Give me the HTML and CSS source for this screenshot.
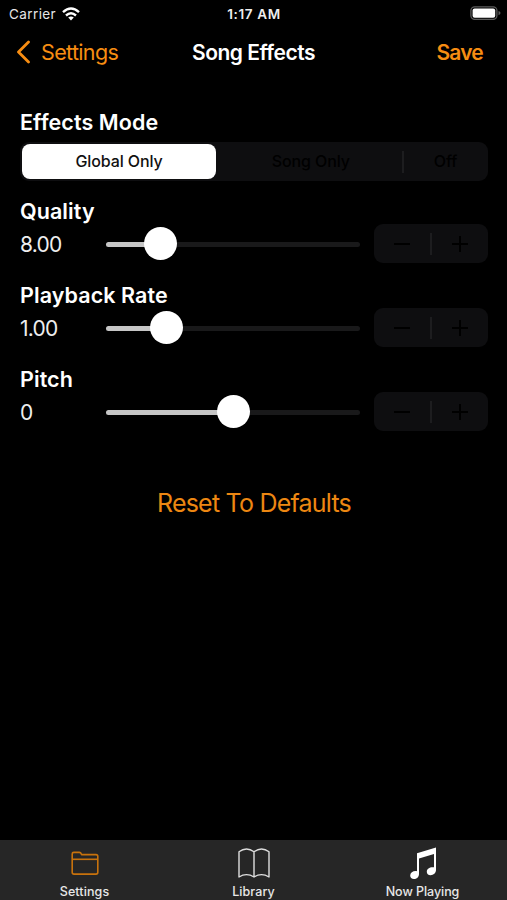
FILE: index.html
```html
<!DOCTYPE html>
<html lang="en">
<head>
<meta charset="utf-8">
<title>Song Effects</title>
<link rel="stylesheet" href="styles.css">
</head>
<body>
<div class="status">
  <div class="carrier"><span>Carrier</span>
    <svg width="18" height="14" viewBox="0 0 18 14"><g fill="none" stroke="#fff" stroke-width="2.4"><path d="M1 5.2Q9-2.2 17 5.2"/><path d="M4 8.5Q9 4 14 8.5"/></g><path d="M6.2 10.6Q9 8.4 11.8 10.6L9 13.6Z" fill="#fff"/></svg>
  </div>
  <div class="time">1:17 AM</div>
  <svg class="battery" width="31" height="14" viewBox="0 0 31 14"><rect x=".9" y=".8" width="26" height="12.6" rx="3.8" fill="none" stroke="#5c5c5c" stroke-width="1.3"/><rect x="2.6" y="2.5" width="22.6" height="9.2" rx="2" fill="#fff"/><path d="M28.5 5Q30.5 5.6 30.5 7.1Q30.5 8.6 28.5 9.2Z" fill="#5c5c5c"/></svg>
</div>
<header class="nav">
  <div class="back">
    <svg width="15" height="24" viewBox="0 0 15 24"><path d="M13.5 2L3.5 12L13.5 22" fill="none" stroke="#f78d12" stroke-width="2.8" stroke-linecap="round" stroke-linejoin="round"/></svg>
    <span>Settings</span>
  </div>
  <h1>Song Effects</h1>
  <div class="save">Save</div>
</header>
<main>
  <h2 class="mode-title">Effects Mode</h2>
  <div class="segments">
    <div class="seg active">Global Only</div>
    <div class="seg song">Song Only</div>
    <i class="divider"></i>
    <div class="seg">Off</div>
  </div>
  <section class="effect">
    <h2>Quality</h2>
    <div class="row">
      <span class="value">8.00</span>
      <div class="slider"><div class="fill" style="width:54px"></div><div class="thumb"></div></div>
      <div class="stepper"><svg width="18" height="18"><path d="M1 9H17"/></svg><i class="divider"></i><svg width="18" height="18"><path d="M1 9H17M9 1V17"/></svg></div>
    </div>
  </section>
  <section class="effect">
    <h2>Playback Rate</h2>
    <div class="row">
      <span class="value">1.00</span>
      <div class="slider"><div class="fill" style="width:60.5px"></div><div class="thumb"></div></div>
      <div class="stepper"><svg width="18" height="18"><path d="M1 9H17"/></svg><i class="divider"></i><svg width="18" height="18"><path d="M1 9H17M9 1V17"/></svg></div>
    </div>
  </section>
  <section class="effect">
    <h2>Pitch</h2>
    <div class="row">
      <span class="value">0</span>
      <div class="slider"><div class="fill" style="width:127.5px"></div><div class="thumb"></div></div>
      <div class="stepper"><svg width="18" height="18"><path d="M1 9H17"/></svg><i class="divider"></i><svg width="18" height="18"><path d="M1 9H17M9 1V17"/></svg></div>
    </div>
  </section>
  <div class="reset"><span>Reset To Defaults</span></div>
</main>
<nav class="tabs">
  <div class="tab">
    <svg width="34" height="34" viewBox="0 0 34 34"><g fill="none" stroke="#c8720c" stroke-width="1.6" stroke-linejoin="round"><path d="M4.2 25.3V7Q4.2 5.4 5.8 5.4H11.5Q12.6 5.4 13 6.4L13.6 7.6H28Q29.8 7.6 29.8 9.4V25.3Q29.8 27.1 28 27.1H6Q4.2 27.1 4.2 25.3Z"/><path d="M4.2 12.3H29.8"/></g></svg>
    <span>Settings</span>
  </div>
  <div class="tab">
    <svg width="34" height="34" viewBox="0 0 34 34"><path d="M17 4.8V30M17 4.8Q9.5-.8 2 4.8V30Q9.5 25.3 17 30Q24.5 25.3 32 30V4.8Q24.5-.8 17 4.8Z" fill="none" stroke="#dedede" stroke-width="1.4" stroke-linejoin="round"/></svg>
    <span>Library</span>
  </div>
  <div class="tab">
    <svg width="34" height="34" viewBox="0 0 34 34"><path d="M11 6.3L30 .6V23C30 26 27.4 28.2 24.6 28.2C22.2 28.2 20.6 26.5 20.8 24.4C21 21.5 24.2 19.6 28 20.3V7L13 11.5V27C13 30 10.6 32 8 32C5.6 32 4 30.4 4.2 28.3C4.4 25.4 7.4 23.6 11 24.2Z" fill="#fff"/></svg>
    <span class="playing">Now Playing</span>
  </div>
</nav>
</body>
</html>
```
FILE: styles.css
```css
* { box-sizing: border-box; }
body { margin: 0; width: 507px; height: 900px; background: #000; color: #fff; font-family: Inter, "Liberation Sans", sans-serif; display: flex; flex-direction: column; overflow: hidden; white-space: nowrap; }
svg { display: block; flex: none; }
h1, h2 { margin: 0; font-weight: 600; }
.status { height: 28px; display: grid; grid-template-columns: 1fr auto 1fr; align-items: center; padding: 0 6px 0 9px; font-size: 13px; }
.carrier { display: flex; align-items: center; gap: 6px; color: #e6e6e6; font-size: 13.5px; letter-spacing: .4px; }
.carrier svg { margin-top: -1px; }
.time { font-size: 13.5px; font-weight: 600; color: #eee; letter-spacing: .6px; margin-right: 2px; }
.battery { justify-self: end; margin: -2px 0 0; }
.nav { height: 48px; display: grid; grid-template-columns: 1fr auto 1fr; align-items: center; padding: 0 25px 0 15px; color: #f78d12; }
.back { display: flex; align-items: center; gap: 11px; font-size: 21.5px; letter-spacing: -.65px; }
.nav h1 { font-size: 21px; color: #fff; margin-left: 10px; letter-spacing: -.48px; }
.save { justify-self: end; font-size: 21px; font-weight: 600; letter-spacing: -.8px; margin-right: -1px; }
main { flex: 1; padding: 32px 19px 0 20px; }
h2 { font-size: 21.5px; line-height: 28px; letter-spacing: .08px; }
.mode-title { margin-bottom: 6px; }
.segments { height: 39px; border-radius: 9px; background: #0e0e10; padding: 2px 0 2px 2px; display: grid; grid-template-columns: 194px 185.5px 1.5px 1fr; align-items: center; font-size: 16px; font-weight: 500; color: #000; letter-spacing: -.1px; }
.seg { text-align: center; height: 35px; line-height: 35px; }
.seg.song { padding-left: 4px; }
.seg.active { border-radius: 8px; background: #fff; color: #111; }
.divider { width: 2px; height: 22px; background: #1d1d1f; }
.effect { height: 84px; padding-top: 16px; }
.row { height: 39px; margin-top: -1px; display: grid; grid-template-columns: 86px 254px 114px; align-items: center; }
.value { font-size: 21px; color: #eee; letter-spacing: -.8px; padding-top: 2px; }
.slider { height: 5px; border-radius: 3px; background: #19191a; display: flex; align-items: center; margin-top: 2px; }
.fill { height: 5px; border-radius: 3px 0 0 3px; background: #c6c6c6; }
.thumb { width: 33px; height: 33px; border-radius: 50%; background: #fff; margin: -3px 0 0 -16.5px; flex: none; }
.stepper { margin-left: 14px; width: 114px; height: 39px; background: #0e0e10; border-radius: 9px; display: grid; grid-template-columns: 56px 2px 56px; align-items: center; justify-items: center; }
.stepper path { stroke: #000; stroke-width: 2; fill: none; }
.reset { text-align: center; margin-top: 54px; font-size: 25px; line-height: 32px; letter-spacing: -.78px; color: #ed8712; }
.tabs { height: 60px; background: #262626; display: grid; grid-template-columns: repeat(3, 1fr); }
.tab { display: flex; flex-direction: column; align-items: center; padding-top: 7px; font-size: 12.5px; font-weight: 500; color: #e8e8e8; }
.tab span { line-height: 18px; margin-top: 2px; letter-spacing: .1px; }
.tab .playing { letter-spacing: -.05px; }
```
